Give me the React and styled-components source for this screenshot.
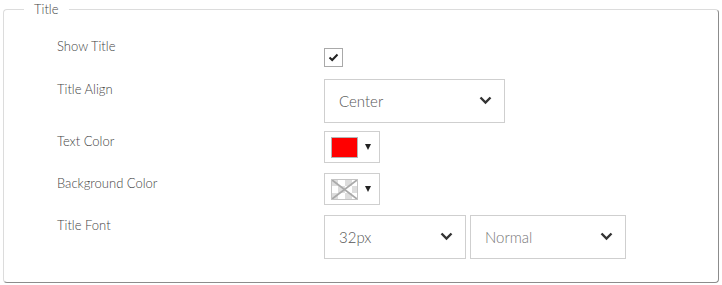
import styled, { createGlobalStyle } from "styled-components";

const GlobalStyle = createGlobalStyle`
  body {
    margin: 0;
    background: #fff;
    font-family: Lato, "Open Sans", sans-serif;
    font-weight: 300;
  }
`;

const Panel = styled.fieldset`
  margin: 0 3px;
  padding: 0 20px 23px;
  border: 1px solid #dcdcdc;
  border-right-color: #8c8c8c;
  border-bottom-color: #8c8c8c;
  border-radius: 4px;
  min-width: 0;
`;

const Legend = styled.legend`
  padding: 0 10px;
  font-size: 13px;
  line-height: 18px;
  color: #444;
`;

const Rows = styled.div`
  display: flex;
  flex-direction: column;
  padding-left: 33px;
  padding-top: 18px;
`;

const Row = styled.div`
  display: grid;
  grid-template-columns: 267px 1fr;
  align-items: start;
  margin-bottom: ${(p) => p.$gap ?? 10}px;
`;

const Label = styled.div`
  font-size: 13px;
  line-height: 20px;
  color: #444;
`;

const Controls = styled.div`
  display: flex;
  gap: 4px;
`;

const Checkbox = styled.span`
  display: flex;
  align-items: center;
  justify-content: center;
  width: 19px;
  height: 19px;
  margin-top: 12px;
  box-sizing: border-box;
  border: 1px solid #a9a9a9;
  background: #fff;
`;

const Select = styled.div`
  display: flex;
  align-items: center;
  justify-content: space-between;
  box-sizing: border-box;
  width: ${(p) => p.$w}px;
  height: ${(p) => p.$h ?? 44}px;
  padding: 0 12px 1px 14px;
  border: 1px solid #cfcfcf;
  background: #fff;
  font-size: 15px;
  color: ${(p) => (p.$muted ? "#777" : "#555")};
`;

const ColorButton = styled.div`
  display: flex;
  align-items: center;
  gap: 7px;
  box-sizing: border-box;
  width: 56px;
  height: 32px;
  padding: 0 6px;
  border: 1px solid #cfcfcf;
  background: #fff;
`;

const Swatch = styled.span`
  display: block;
  width: 27px;
  height: 21px;
  box-sizing: border-box;
  border: 1px solid #b5b5b5;
  background: ${(p) => p.$color};
`;

const Caret = styled.span`
  width: 0;
  height: 0;
  border-left: 3.5px solid transparent;
  border-right: 3.5px solid transparent;
  border-top: 6px solid #222;
`;

function Chevron() {
  return (
    <svg width="13" height="9" viewBox="0 0 13 9">
      <path d="M1.5 1.5 L6.5 6.5 L11.5 1.5" fill="none" stroke="#333" strokeWidth="2.4" />
    </svg>
  );
}

function Tick() {
  return (
    <svg width="11" height="9" viewBox="0 0 11 9">
      <path d="M1.5 4.5 L4.2 7 L9.5 1.5" fill="none" stroke="#222" strokeWidth="2" />
    </svg>
  );
}

function TransparentSwatch() {
  return (
    <svg width="27" height="21" viewBox="0 0 27 21">
      <rect width="27" height="21" fill="#fff" />
      <rect x="0" y="0" width="7" height="7" fill="#ddd" />
      <rect x="14" y="0" width="7" height="7" fill="#ddd" />
      <rect x="7" y="7" width="7" height="7" fill="#ddd" />
      <rect x="21" y="7" width="6" height="7" fill="#ddd" />
      <rect x="0" y="14" width="7" height="7" fill="#ddd" />
      <rect x="14" y="14" width="7" height="7" fill="#ddd" />
      <path d="M1 1 L26 20 M26 1 L1 20" stroke="#aaa" strokeWidth="1.6" />
      <rect x="0.5" y="0.5" width="26" height="20" fill="none" stroke="#c4c4c4" />
    </svg>
  );
}

export default function App() {
  return (
    <>
      <GlobalStyle />
      <Panel>
        <Legend>Title</Legend>
        <Rows>
          <Row $gap={12}>
            <Label>Show Title</Label>
            <div>
              <Checkbox>
                <Tick />
              </Checkbox>
            </div>
          </Row>
          <Row $gap={8}>
            <Label>Title Align</Label>
            <Controls>
              <Select $w={181}>
                Center
                <Chevron />
              </Select>
            </Controls>
          </Row>
          <Row $gap={10}>
            <Label>Text Color</Label>
            <Controls>
              <ColorButton>
                <Swatch $color="#ff0000" />
                <Caret />
              </ColorButton>
            </Controls>
          </Row>
          <Row $gap={10}>
            <Label>Background Color</Label>
            <Controls>
              <ColorButton>
                <TransparentSwatch />
                <Caret />
              </ColorButton>
            </Controls>
          </Row>
          <Row $gap={0}>
            <Label>Title Font</Label>
            <Controls>
              <Select $w={142}>
                32px
                <Chevron />
              </Select>
              <Select $w={156} $muted>
                Normal
                <Chevron />
              </Select>
            </Controls>
          </Row>
        </Rows>
      </Panel>
    </>
  );
}
